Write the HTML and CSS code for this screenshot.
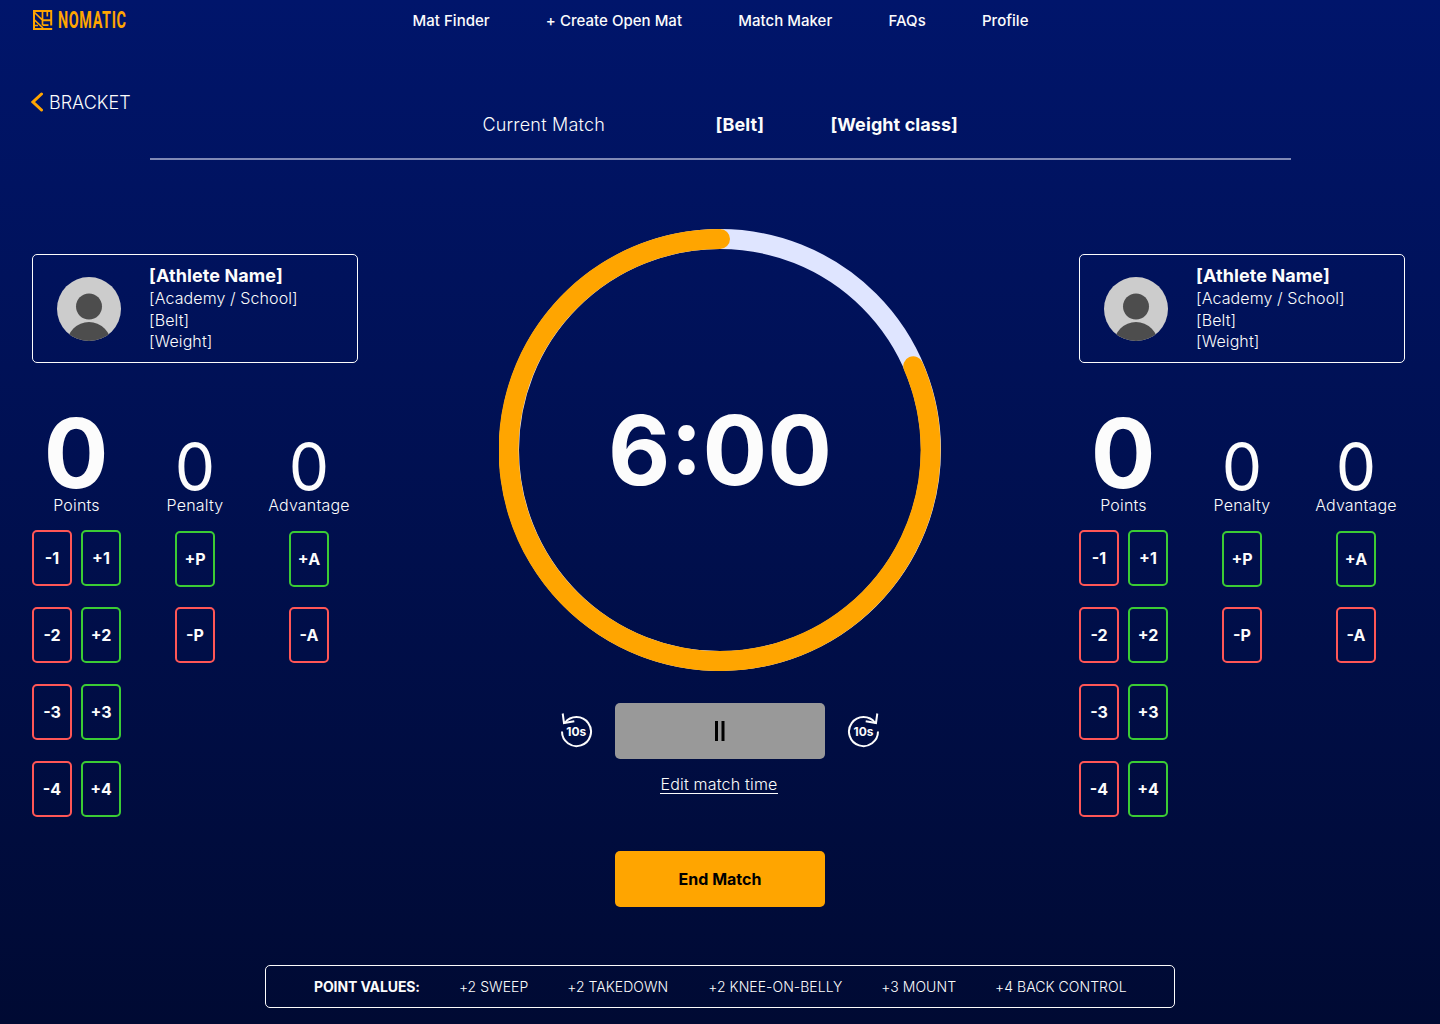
FILE: index.html
```html
<!DOCTYPE html>
<html lang="en">
<head>
<meta charset="utf-8">
<title>Nomatic – Current Match</title>
<link rel="stylesheet" href="styles.css">
</head>
<body>
<header class="header">
  <svg class="logo" width="110" height="24" viewBox="0 0 110 24">
    <g fill="none" stroke="#ffa500" stroke-width="2">
      <path d="M19.200 17.500V3H2v18h18.200M10.500 12.200h9"/>
      <path d="M2 4l8.500 8.200M10.500 3v14M15.300 3v5.500M2 11.500l9 8.500M2 17.500h4M10.500 17.200h6" stroke-width="1.700"/>
    </g>
    <text class="logo-text" x="26" y="20" textLength="68.500" lengthAdjust="spacingAndGlyphs">NOMATIC</text>
  </svg>
  <nav class="nav">
    <a>Mat Finder</a><a>+ Create Open Mat</a><a>Match Maker</a><a>FAQs</a><a>Profile</a>
  </nav>
</header>

<div class="back">
  <svg width="12" height="20" viewBox="0 0 12 20"><path d="M10.500 2L2 10l8.500 8" fill="none" stroke="#ffa500" stroke-width="3" stroke-linecap="round"/></svg>
  <span>BRACKET</span>
</div>

<section class="match-info">
  <span class="current">Current Match</span>
  <b class="belt">[Belt]</b>
  <b>[Weight class]</b>
</section>

<main class="board">
  <section class="athlete">
    <div class="card">
      <svg class="avatar" width="64" height="64" viewBox="0 0 64 64"><defs><clipPath id="face-a"><circle cx="32" cy="32" r="32"/></clipPath></defs><g clip-path="url(#face-a)"><path fill="#ccc" d="M0 0h64v64H0z"/><circle cx="32" cy="29.500" r="13" fill="#4d4d4d"/><circle cx="32" cy="67" r="22" fill="#4d4d4d"/></g></svg>
      <div class="details"><b>[Athlete Name]</b><span>[Academy / School]</span><span>[Belt]</span><span>[Weight]</span></div>
    </div>
    <div class="scores">
      <div class="score points"><strong>0</strong><span>Points</span>
        <div class="buttons">
          <button class="minus">-1</button><button class="plus">+1</button>
          <button class="minus">-2</button><button class="plus">+2</button>
          <button class="minus">-3</button><button class="plus">+3</button>
          <button class="minus">-4</button><button class="plus">+4</button>
        </div>
      </div>
      <div class="score penalty"><strong>0</strong><span>Penalty</span>
        <div class="buttons"><button class="plus">+P</button><button class="minus">-P</button></div>
      </div>
      <div class="score advantage"><strong>0</strong><span>Advantage</span>
        <div class="buttons"><button class="plus">+A</button><button class="minus">-A</button></div>
      </div>
    </div>
  </section>

  <section class="clock">
    <div class="dial">
      <svg width="442" height="442" viewBox="0 0 442 442" fill="none" stroke-width="20">
        <circle cx="221" cy="221" r="211" stroke="#dfe5ff"/>
        <path d="M414.300 137.300A211 211 0 1 1 221 10" stroke="#ffa500" stroke-linecap="round"/>
      </svg>
      <time class="time">6:00</time>
    </div>
    <div class="controls">
      <svg class="skip" width="34" height="36" viewBox="0 0 34 36">
        <path d="M3 18.500A14.500 14.500 0 1 0 5.800 10" fill="none" stroke="#fcfcfc" stroke-width="2"/>
        <path d="M3.700 .5L5 10l10.300-1.800" fill="none" stroke="#fcfcfc" stroke-width="2"/>
        <text class="skip-text" x="17.300" y="23">10s</text>
      </svg>
      <button class="pause" aria-label="Pause"><svg width="10" height="20" viewBox="0 0 10 20"><path d="M0 0h3v20H0zM6.500 0h3v20h-3z" fill="#000"/></svg></button>
      <svg class="skip" width="34" height="36" viewBox="0 0 34 36">
        <path d="M31 18.500A14.500 14.500 0 1 1 28.200 10" fill="none" stroke="#fcfcfc" stroke-width="2"/>
        <path d="M30.300 .5L29 10 18.700 8.200" fill="none" stroke="#fcfcfc" stroke-width="2"/>
        <text class="skip-text" x="16.500" y="23">10s</text>
      </svg>
    </div>
    <a class="edit">Edit match time</a>
    <button class="end">End Match</button>
  </section>

  <section class="athlete">
    <div class="card">
      <svg class="avatar" width="64" height="64" viewBox="0 0 64 64"><defs><clipPath id="face-b"><circle cx="32" cy="32" r="32"/></clipPath></defs><g clip-path="url(#face-b)"><path fill="#ccc" d="M0 0h64v64H0z"/><circle cx="32" cy="29.500" r="13" fill="#4d4d4d"/><circle cx="32" cy="67" r="22" fill="#4d4d4d"/></g></svg>
      <div class="details"><b>[Athlete Name]</b><span>[Academy / School]</span><span>[Belt]</span><span>[Weight]</span></div>
    </div>
    <div class="scores">
      <div class="score points"><strong>0</strong><span>Points</span>
        <div class="buttons">
          <button class="minus">-1</button><button class="plus">+1</button>
          <button class="minus">-2</button><button class="plus">+2</button>
          <button class="minus">-3</button><button class="plus">+3</button>
          <button class="minus">-4</button><button class="plus">+4</button>
        </div>
      </div>
      <div class="score penalty"><strong>0</strong><span>Penalty</span>
        <div class="buttons"><button class="plus">+P</button><button class="minus">-P</button></div>
      </div>
      <div class="score advantage"><strong>0</strong><span>Advantage</span>
        <div class="buttons"><button class="plus">+A</button><button class="minus">-A</button></div>
      </div>
    </div>
  </section>
</main>

<footer class="values">
  <b>POINT VALUES:</b><span>+2 SWEEP</span><span class="takedown">+2 TAKEDOWN</span><span>+2 KNEE-ON-BELLY</span><span>+3 MOUNT</span><span>+4 BACK CONTROL</span>
</footer>
</body>
</html>
```
FILE: styles.css
```css
* { box-sizing: border-box; }
body {
  margin: 0;
  width: 1440px;
  height: 1024px;
  overflow: hidden;
  background: linear-gradient(#00156b, #000a33);
  color: #fcfcfc;
  font-family: Inter, "Liberation Sans", sans-serif;
  font-weight: 300;
  font-size: 16px;
}
b { font-weight: 700; }
button {
  margin: 0;
  padding: 0;
  border: 0;
  background: none;
  color: inherit;
  font: 700 16px/24px Inter, sans-serif;
}
.header {
  display: grid;
  grid-template-columns: 1fr auto 1fr;
  align-items: center;
  height: 41px;
  padding: 0 31px 0 32px;
}
.logo { display: block; align-self: start; margin-top: 8px; overflow: visible; }
.logo-text {
  font: 700 23px Roboto, sans-serif;
  letter-spacing: 1px;
  fill: #ffa500;
}
.nav {
  display: flex;
  gap: 56.200px;
  font-size: 15px;
  font-weight: 500;
  letter-spacing: .03px;
}
.back {
  display: flex;
  align-items: center;
  gap: 6px;
  height: 24px;
  margin: 49px 0 1px 31px;
  font-size: 18px;
}
.match-info {
  display: flex;
  align-items: center;
  width: 1141px;
  height: 45px;
  margin-left: 150.400px;
  padding: 0 0 24px 332px;
  border-bottom: 2px solid #8089b5;
  font-size: 18px;
}
.match-info b { letter-spacing: .08px; }
.match-info .current { width: 233px; letter-spacing: .2px; }
.belt { width: 115px; }
.board {
  display: grid;
  grid-template-columns: 326px 1fr 326px;
  height: 736px;
  padding: 69px 35px 0 32px;
}
.athlete { padding-top: 25px; }
.card {
  display: flex;
  align-items: center;
  gap: 28px;
  height: 109px;
  padding-left: 24px;
  border: 1px solid #fcfcfc;
  border-radius: 5px;
}
.details {
  display: flex;
  flex-direction: column;
  line-height: 21.500px;
  letter-spacing: .1px;
}
.details b { font-size: 18px; line-height: 24px; }
.scores { display: flex; padding-top: 42px; }
.score { display: flex; flex-direction: column; align-items: center; }
.points { width: 89px; }
.penalty { width: 60px; margin-left: 44px; }
.advantage { width: 84px; margin-left: 42px; }
.score strong {
  height: 88px;
  padding-top: 35px;
  font-size: 64px;
  font-weight: 400;
  line-height: 54px;
}
.points strong {
  padding: 9px 1px 0 0;
  font-size: 96px;
  font-weight: 700;
  line-height: 78px;
}
.score > span { line-height: 24px; letter-spacing: .2px; }
.buttons {
  display: grid;
  gap: 20px;
  padding-top: 14px;
}
.points .buttons {
  grid-template-columns: 40px 40px;
  gap: 21px 9px;
  padding-top: 13px;
}
.buttons button {
  width: 40px;
  height: 56px;
  border: 2px solid #ff5656;
  border-radius: 5px;
}
.buttons .plus { border-color: #3bcc34; }
.clock {
  display: flex;
  flex-direction: column;
  align-items: center;
  padding-left: 3px;
}
.dial { display: grid; place-items: center; }
.dial > * { grid-area: 1 / 1; }
.dial svg { display: block; }
.time { font-size: 96px; font-weight: 700; line-height: 120px; }
.controls {
  display: flex;
  align-items: center;
  gap: 22px;
  margin-top: 32px;
}
.skip-text { font: 700 12px Inter, sans-serif; fill: #fcfcfc; text-anchor: middle; }
.pause, .end {
  display: flex;
  align-items: center;
  justify-content: center;
  width: 210px;
  height: 56px;
  border-radius: 5px;
  background: #999;
}
.edit {
  height: 20px;
  margin: 15px 2px 0 0;
  line-height: 21px;
  letter-spacing: .2px;
  border-bottom: 1px solid #fcfcfc;
}
.end { margin-top: 57px; background: #ffa500; color: #000; }
.values {
  display: flex;
  align-items: center;
  gap: 39px;
  width: 910px;
  height: 43px;
  margin: 69px 0 0 265px;
  padding-left: 48px;
  border: 1px solid #fcfcfc;
  border-radius: 5px;
  font-size: 14px;
  letter-spacing: .04px;
}
.values b { letter-spacing: -.12px; }
.takedown { margin-right: 1px; }
```
